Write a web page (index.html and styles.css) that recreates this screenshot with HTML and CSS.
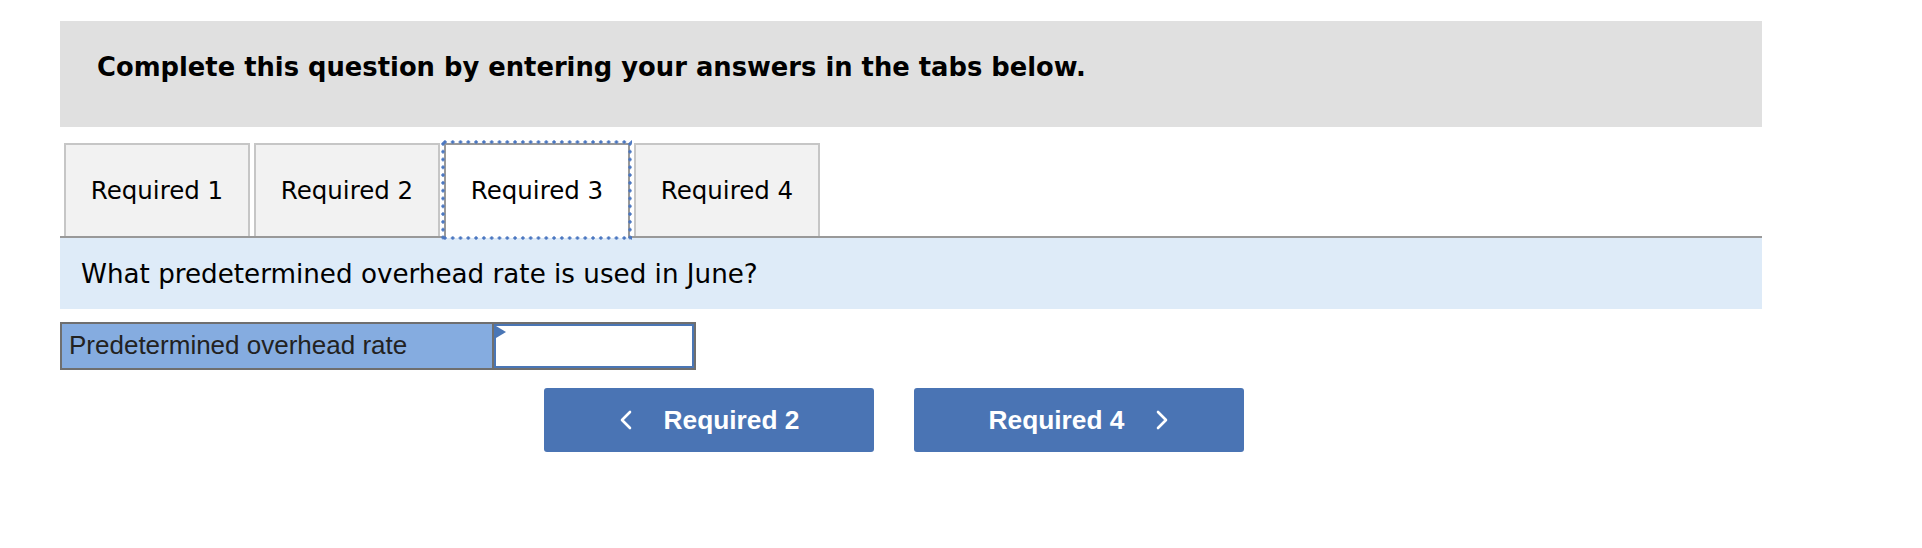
FILE: index.html
```html
<!DOCTYPE html>
<html>
<head>
<meta charset="utf-8">
<link rel="stylesheet" href="styles.css">
</head>
<body>
<div class="page">
  <div class="header">Complete this question by entering your answers in the tabs below.</div>
  <div class="tabs">
    <div class="tab">Required 1</div>
    <div class="tab">Required 2</div>
    <div class="tab active">Required 3</div>
    <div class="tab">Required 4</div>
  </div>
  <div class="question">What predetermined overhead rate is used in June?</div>
  <div class="answer">
    <div class="label">Predetermined overhead rate</div>
    <div class="input"><span class="marker"></span></div>
  </div>
  <div class="nav">
    <div class="btn">
      <svg class="chev" width="14" height="20" viewBox="0 0 14 20"><polyline points="11,2 3,10 11,18" fill="none" stroke="#fff" stroke-width="2.6" stroke-linecap="round" stroke-linejoin="round"/></svg>
      <span>Required 2</span>
    </div>
    <div class="btn">
      <span>Required 4</span>
      <svg class="chev" width="14" height="20" viewBox="0 0 14 20"><polyline points="3,2 11,10 3,18" fill="none" stroke="#fff" stroke-width="2.6" stroke-linecap="round" stroke-linejoin="round"/></svg>
    </div>
  </div>
</div>
</body>
</html>
```
FILE: styles.css
```css
html, body {
  margin: 0;
  padding: 0;
  background: #fff;
}
.page {
  padding: 21px 0 0 60px;
  width: 1702px;
  font-family: "DejaVu Sans", Verdana, sans-serif;
  color: #000;
}
.header {
  height: 106px;
  box-sizing: border-box;
  background: #e0e0e0;
  padding: 31px 0 0 37px;
  font-weight: bold;
  font-size: 25.8px;
}
.tabs {
  margin-top: 16px;
  display: flex;
  gap: 4px;
  padding-left: 4px;
  border-bottom: 2px solid #999;
  height: 93px;
}
.tab {
  width: 186px;
  box-sizing: border-box;
  height: 93px;
  background: #f2f2f2;
  border: 2px solid #c6c6c6;
  border-bottom: none;
  display: flex;
  align-items: center;
  justify-content: center;
  font-size: 24.5px;
}
.tab.active {
  background: #fff;
  border-color: #999;
  height: 95px;
  padding-bottom: 2px;
  position: relative;
}
.tab.active::after {
  content: "";
  position: absolute;
  top: -5px;
  left: -5px;
  right: -4px;
  bottom: -2px;
  pointer-events: none;
  background:
    radial-gradient(circle, #4a76c0 1.4px, transparent 1.9px) left top / 7.8px 4px repeat-x,
    radial-gradient(circle, #4a76c0 1.4px, transparent 1.9px) left bottom / 7.8px 4px repeat-x,
    radial-gradient(circle, #4a76c0 1.4px, transparent 1.9px) left top / 4px 7.8px repeat-y,
    radial-gradient(circle, #4a76c0 1.4px, transparent 1.9px) right top / 4px 7.8px repeat-y;
}
.question {
  height: 71px;
  background: #deebf8;
  display: flex;
  align-items: center;
  padding-left: 21px;
  font-size: 26.2px;
}
.answer {
  margin-top: 13px;
  width: 636px;
  height: 48px;
  box-sizing: border-box;
  border: 2px solid #6f6f6f;
  display: flex;
}
.label {
  width: 432px;
  box-sizing: border-box;
  background: #85ace0;
  border-right: 2px solid #6f6f6f;
  font-family: "Liberation Sans", Arial, sans-serif;
  font-size: 26px;
  color: #222;
  padding: 0 0 2px 7px;
  display: flex;
  align-items: center;
}
.input {
  flex: 1;
  background: #fff;
  border: 2px solid #4a76b5;
  position: relative;
}
.marker {
  position: absolute;
  left: 0;
  top: 0;
  width: 0;
  height: 0;
  border-top: 6px solid transparent;
  border-bottom: 6px solid transparent;
  border-left: 10px solid #4a76b5;
}
.nav {
  margin: 18px 0 0 484px;
  display: flex;
  gap: 40px;
}
.btn {
  width: 330px;
  height: 64px;
  border-radius: 3px;
  background: #4a74b4;
  color: #fff;
  font-family: "Liberation Sans", Arial, sans-serif;
  font-weight: bold;
  font-size: 26.3px;
  display: flex;
  align-items: center;
  justify-content: center;
  gap: 31px;
}
.chev {
  display: block;
}
```
